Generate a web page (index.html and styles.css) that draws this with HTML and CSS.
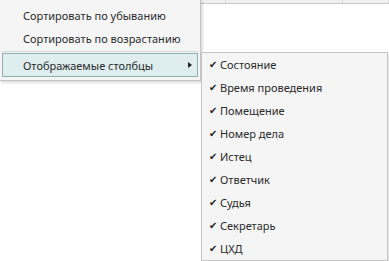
FILE: index.html
```html
<!DOCTYPE html>
<html lang="ru">
<head>
  <meta charset="UTF-8">
  <title>Контекстное меню</title>
  <link rel="stylesheet" href="styles.css">
</head>
<body>

<div class="grid-head">
  <div class="grid-col col-a"></div>
  <div class="grid-col col-b"></div>
  <div class="grid-col col-c"></div>
</div>

<ul class="menu main-menu">
  <li class="menu-item">Сортировать по убыванию</li>
  <li class="menu-item">Сортировать по возрастанию</li>
  <li class="menu-sep"></li>
  <li class="menu-item active">Отображаемые столбцы <span class="arrow"></span></li>
</ul>

<ul class="menu sub-menu">
  <li class="menu-item checked">Состояние</li>
  <li class="menu-item checked">Время проведения</li>
  <li class="menu-item checked">Помещение</li>
  <li class="menu-item checked">Номер дела</li>
  <li class="menu-item checked">Истец</li>
  <li class="menu-item checked">Ответчик</li>
  <li class="menu-item checked">Судья</li>
  <li class="menu-item checked">Секретарь</li>
  <li class="menu-item checked">ЦХД</li>
</ul>

</body>
</html>
```

FILE: styles.css
```css
/* Reset */
* {
  margin: 0;
  padding: 0;
  box-sizing: border-box;
}

body {
  background: #ffffff;
  font-family: 'Noto Sans', 'Open Sans', sans-serif;
  font-size: 11px;
  color: #2b2b2b;
  position: relative;
  height: 261px;
  overflow: hidden;
}

/* Table header behind the menu */
.grid-head {
  display: flex;
  height: 4px;
  border-bottom: 1px solid #c8c8c8;
  background: #f0f0f0;
}

.grid-col {
  border-right: 1px solid #dcdcdc;
}

.col-a { width: 226px; }
.col-b { width: 117px; }
.col-c { flex: 1; }

/* Context menus */
.menu {
  list-style: none;
  position: absolute;
  background: #f5f5f5;
  border: 1px solid #c4c4c4;
  box-shadow: 2px 2px 2px rgba(0, 0, 0, 0.12);
}

.main-menu {
  left: -1px;
  top: -1px;
  width: 202px;
  padding: 4px 2px 3px 2px;
}

.sub-menu {
  left: 201px;
  top: 52px;
  width: 187px;
  padding: 0 2px 0 2px;
}

.menu-item {
  display: flex;
  align-items: center;
  height: 23px;
  padding-left: 20px;
  border: 1px solid transparent;
  white-space: nowrap;
}

.menu-sep {
  height: 1px;
  background: #d7d7d7;
  margin: 1px 0 1px 0;
}

.main-menu .menu-item.active {
  height: 24px;
  background: #deeeee;
  border-color: #8fb0b0;
}

.arrow {
  margin-left: auto;
  margin-right: 5px;
  width: 0;
  height: 0;
  border-top: 3px solid transparent;
  border-bottom: 3px solid transparent;
  border-left: 4px solid #222;
}

.sub-menu .menu-item {
  padding-left: 15px;
  position: relative;
}

.sub-menu .menu-item.checked::before {
  content: "✔";
  position: absolute;
  left: 4px;
  font-size: 10px;
  font-family: 'DejaVu Sans', sans-serif;
  color: #222;
}
```
